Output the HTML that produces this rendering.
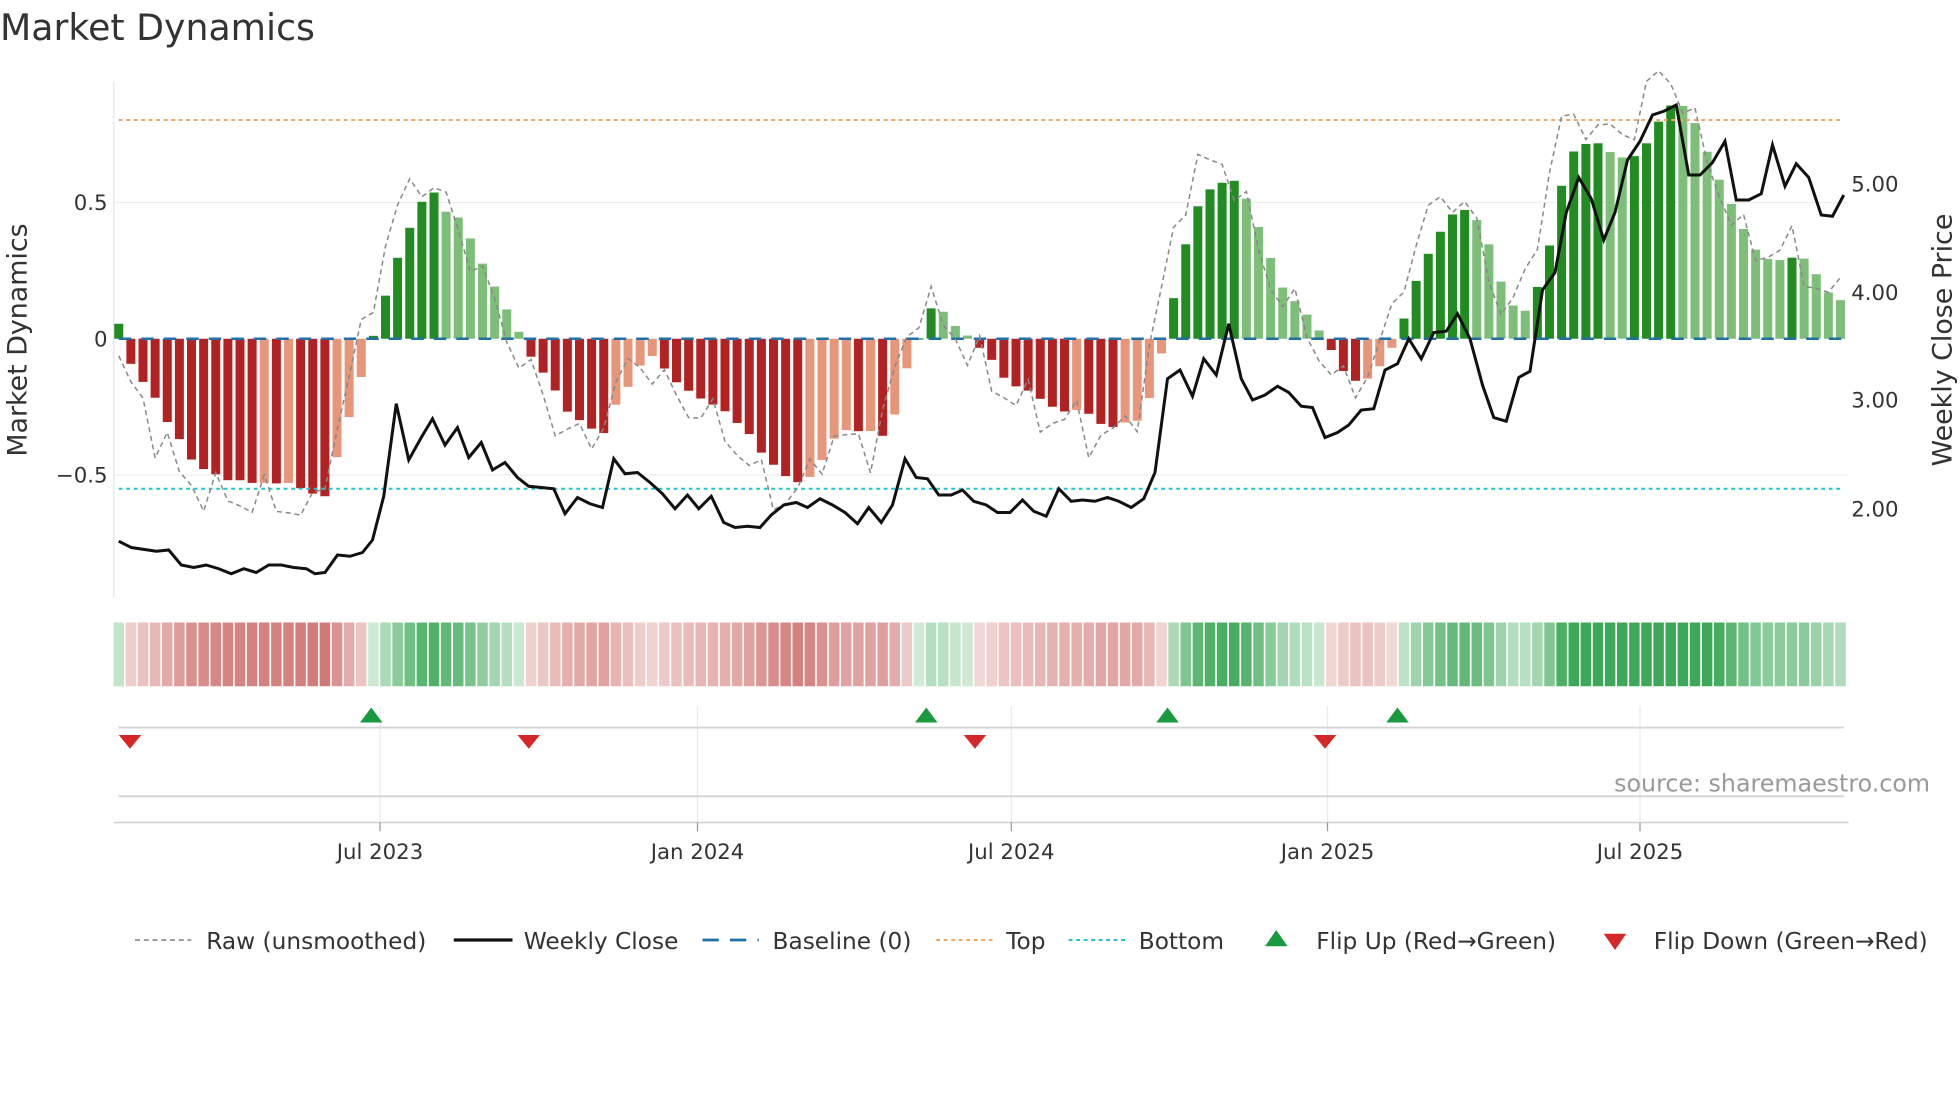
<!DOCTYPE html>
<html><head><meta charset="utf-8">
<style>
html,body{margin:0;padding:0;background:#fff;}
svg{display:block;font-family:"DejaVu Sans","Liberation Sans",sans-serif;}
</style></head>
<body>
<svg id="s" width="1960" height="1102" viewBox="0 0 1568 881.6" xmlns="http://www.w3.org/2000/svg">
<rect width="1568" height="882" fill="#fff"/>
<text x="0" y="32" font-size="29" fill="#333">Market Dynamics</text>
<line x1="91" y1="65" x2="91" y2="478" stroke="#e6e6e6"/>
<line x1="91" y1="162" x2="1479" y2="162" stroke="#eeeeee"/>
<line x1="91" y1="380" x2="1479" y2="380" stroke="#eeeeee"/>
<g font-size="17" fill="#333" text-anchor="end">
<text x="86" y="168">0.5</text><text x="86" y="277">0</text><text x="86" y="386">−0.5</text>
</g>
<g font-size="17" fill="#333">
<text x="1481" y="153">5.00</text><text x="1481" y="240">4.00</text><text x="1481" y="326">3.00</text><text x="1481" y="413">2.00</text>
</g>
<text transform="translate(21,272) rotate(-90)" font-size="21.5" fill="#333" text-anchor="middle">Market Dynamics</text>
<text transform="translate(1561,272) rotate(-90)" font-size="21.5" fill="#333" text-anchor="middle">Weekly Close Price</text>
<g id="bars"></g>
<line x1="95" y1="271" x2="1475" y2="271" stroke="#1f6fa8" stroke-width="2" stroke-dasharray="10,8"/>
<line x1="95" y1="96" x2="1475" y2="96" stroke="#f0a868" stroke-width="1.6" stroke-dasharray="3,3"/>
<line x1="95" y1="391" x2="1475" y2="391" stroke="#22c4d4" stroke-width="1.6" stroke-dasharray="3,3"/>
<polyline id="raw" fill="none" stroke="#888" stroke-width="1.2" stroke-dasharray="4,3"/>
<polyline id="close" fill="none" stroke="#111" stroke-width="2.4"/>
<g id="heat"></g>
<g stroke="#eaeaea">
<line x1="304" y1="565" x2="304" y2="658"/><line x1="558" y1="565" x2="558" y2="658"/><line x1="809" y1="565" x2="809" y2="658"/><line x1="1062" y1="565" x2="1062" y2="658"/><line x1="1312" y1="565" x2="1312" y2="658"/>
</g>
<line x1="95" y1="582" x2="1475" y2="582" stroke="#d4d4d4" stroke-width="1.5"/>
<line x1="95" y1="637" x2="1475" y2="637" stroke="#d4d4d4" stroke-width="1.5"/>
<line x1="91" y1="658" x2="1479" y2="658" stroke="#cfcfcf" stroke-width="1.2"/>
<g id="marks"></g>
<g stroke="#999"><line x1="304" y1="658" x2="304" y2="665"/><line x1="558" y1="658" x2="558" y2="665"/><line x1="809" y1="658" x2="809" y2="665"/><line x1="1062" y1="658" x2="1062" y2="665"/><line x1="1312" y1="658" x2="1312" y2="665"/></g>
<g font-size="17" fill="#333" text-anchor="middle">
<text x="304" y="687">Jul 2023</text><text x="558" y="687">Jan 2024</text><text x="809" y="687">Jul 2024</text><text x="1062" y="687">Jan 2025</text><text x="1312" y="687">Jul 2025</text>
</g>
<text x="1544" y="633" font-size="19" fill="#999" text-anchor="end">source: sharemaestro.com</text>
<g font-size="18.6" fill="#333">
<line x1="108" y1="752" x2="153" y2="752" stroke="#888" stroke-width="1.3" stroke-dasharray="4,3"/>
<text x="165" y="759">Raw (unsmoothed)</text>
<line x1="363" y1="752" x2="410" y2="752" stroke="#111" stroke-width="2.6"/>
<text x="419" y="759">Weekly Close</text>
<line x1="562" y1="752" x2="607" y2="752" stroke="#1f6fa8" stroke-width="2.2" stroke-dasharray="13,9"/>
<text x="618" y="759">Baseline (0)</text>
<line x1="749" y1="752" x2="794" y2="752" stroke="#f0a868" stroke-width="1.6" stroke-dasharray="3,3"/>
<text x="805" y="759">Top</text>
<line x1="855" y1="752" x2="900" y2="752" stroke="#22c4d4" stroke-width="1.6" stroke-dasharray="3,3"/>
<text x="911" y="759">Bottom</text>
<polygon points="1012,757 1030,757 1021,744" fill="#1a9a3e"/>
<text x="1053" y="759">Flip Up (Red→Green)</text>
<polygon points="1283,747 1301,747 1292,760" fill="#d62728"/>
<text x="1323" y="759">Flip Down (Green→Red)</text>
</g>
</svg>
<script>
(function(){
var NS="http://www.w3.org/2000/svg";
function el(t,a,p){var e=document.createElementNS(NS,t);for(var k in a)e.setAttribute(k,a[k]);p.appendChild(e);return e;}
var H=[95,259,104,290,114,305,124,318,134,338,144,352,154,369,164,376,174,380,184,385,194,384,204,387,214,386,224,387,234,386,244,393,254,396,260,397,268,371,278,338,288,305,298,271,307,241,317,209,327,184,337,162,346,152,356,169,366,173,375,188,385,209,394,226,404,245,414,263,423,283,433,296,443,310,452,328,462,335,472,342,482,349,491,326,500,314,510,295,520,283,530,293,540,305,550,312,559,318,569,323,579,328,588,337,598,345,608,361,617,370,627,380,637,386,646,384,656,371,666,352,676,344,686,345,695,344,705,350,714,339,724,298,733,278,742,248,751,244,761,259,770,264,779,274,789,283,798,293,808,311,818,307,827,318,837,320,847,331,857,327,866,329,876,333,886,346,895,337,905,339,915,334,924,303,934,264,944,212,954,176,963,153,973,150,983,142,993,148,1002,172,1012,192,1022,224,1031,237,1041,245,1050,258,1060,270,1070,290,1079,303,1089,306,1099,300,1108,287,1118,271,1127,243,1137,212,1147,196,1157,176,1166,168,1176,168,1186,183,1195,205,1205,240,1215,248,1224,249,1234,216,1244,181,1253,126,1263,118,1273,113,1283,116,1292,126,1302,126,1312,124,1322,106,1331,90,1341,80,1351,89,1360,106,1370,133,1380,153,1389,171,1399,192,1409,206,1418,208,1428,208,1437,205,1447,208,1457,227,1466,238,1475,241];
function interp(A,x){for(var i=0;i<A.length-2;i+=2){if(x<=A[i+2]){var t=(x-A[i])/(A[i+2]-A[i]);return A[i+1]+t*(A[i+3]-A[i+1]);}}return A[A.length-1];}
var bars=document.getElementById("bars"),heat=document.getElementById("heat");
var N=143,xs=[],ys=[];
for(var i=0;i<N;i++){var x=95+i*9.7;if(x>1476)x=1475;var y=interp(H,x);xs.push(x);ys.push(y);}
for(var i=0;i<N;i++){
 var x=xs[i],y=ys[i],v=(271-y)/218,pv=i>0?(271-ys[i-1])/218:v;
 var c;if(v>=0){c=(v>=pv)?"#228b22":"#7dbe78";}else{c=(v<=pv)?"#b22222":"#e8967a";}
 var top=Math.min(y,271),h=Math.abs(271-y);if(h<1)h=1;
 el("rect",{x:x-3.6,y:top,width:7.2,height:h,fill:c},bars);
 var a=Math.min(0.9,0.22+Math.abs(v)*1.1);
 var hc=v>=0?"rgba(40,160,70,"+a+")":"rgba(190,60,55,"+(a*0.8)+")";
 el("rect",{x:x-4.2,y:498,width:8.4,height:51,fill:hc},heat);
}
var rp=[];for(var i=0;i<N;i++){var j=Math.min(N-1,i+1);var v=(271-ys[j])/218;v=v*1.12+0.06*Math.sin(i*1.7)+0.04*Math.cos(i*3.1);rp.push(xs[i].toFixed(1)+","+(271-v*218).toFixed(1));}
document.getElementById("raw").setAttribute("points",rp.join(" "));
var C=[95,433,105,438,125,441,135,440,145,452,155,454,165,452,175,455,185,459,195,455,205,458,215,452,225,452,235,454,245,455,252,459,260,458,270,444,280,445,290,442,298,432,307,397,317,323,327,368,337,350,346,335,356,356,366,342,375,366,385,354,394,376,404,370,414,382,423,389,433,390,443,391,452,411,462,398,472,403,482,406,491,367,500,379,510,378,520,386,530,395,540,407,550,396,559,407,569,397,579,418,588,422,598,421,608,422,617,412,627,404,637,402,646,406,656,399,666,404,676,410,686,419,695,406,705,418,714,404,724,367,733,382,742,383,751,396,761,396,770,392,779,401,789,404,798,410,808,410,818,400,827,409,837,413,847,391,857,401,866,400,876,401,886,398,895,401,905,406,915,399,924,378,934,303,944,296,954,317,963,287,973,300,983,259,993,303,1002,320,1012,316,1022,309,1031,314,1041,325,1050,326,1060,350,1070,346,1079,340,1089,328,1099,327,1108,296,1118,291,1127,271,1137,287,1147,266,1157,265,1166,251,1176,271,1186,308,1195,334,1205,337,1215,302,1224,297,1234,232,1244,218,1253,170,1263,142,1273,159,1283,192,1292,170,1302,128,1312,113,1322,92,1331,89,1341,84,1351,140,1360,140,1370,130,1380,113,1389,160,1399,160,1409,155,1418,116,1428,149,1437,131,1447,142,1457,172,1466,173,1475,156];
var cp=[];for(var i=0;i<C.length;i+=2)cp.push(C[i]+","+C[i+1]);
document.getElementById("close").setAttribute("points",cp.join(" "));
var m=document.getElementById("marks");
[297,741,934,1118].forEach(function(x){el("polygon",{points:(x-9)+",578 "+(x+9)+",578 "+x+",566",fill:"#1a9a3e"},m);});
[104,423,780,1060].forEach(function(x){el("polygon",{points:(x-9)+",588 "+(x+9)+",588 "+x+",599",fill:"#d62728"},m);});
})();
</script>
</body></html>
